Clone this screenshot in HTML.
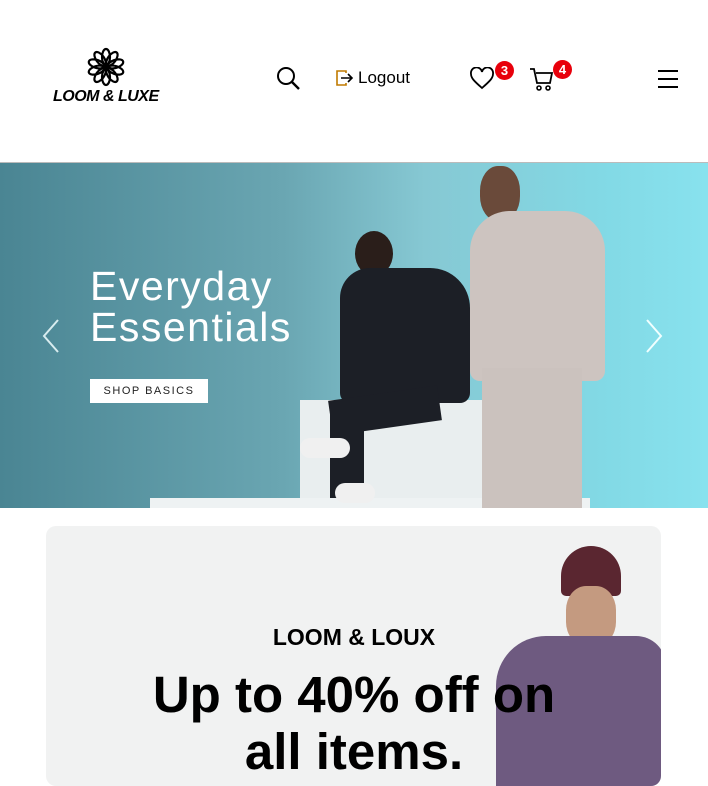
<!DOCTYPE html>
<html><head><style>
body{margin:0;width:708px;height:767px;overflow:hidden;background:#fff;font-family:"Liberation Sans",sans-serif;position:relative}
.abs{position:absolute}
.badge{position:absolute;width:19px;height:19px;border-radius:50%;background:#e8000b;color:#fff;font-weight:bold;font-size:13px;text-align:center;line-height:19px}
</style></head><body>
<svg class="abs" style="left:84px;top:47px" width="44" height="40" viewBox="0 0 44 40">
<g transform="translate(22,20)" fill="none" stroke="#000" stroke-width="2.2">
<g id="p"><ellipse cx="0" cy="-10" rx="4" ry="8"/></g>
<use href="#p" transform="rotate(36)"/><use href="#p" transform="rotate(72)"/><use href="#p" transform="rotate(108)"/><use href="#p" transform="rotate(144)"/><use href="#p" transform="rotate(180)"/><use href="#p" transform="rotate(216)"/><use href="#p" transform="rotate(252)"/><use href="#p" transform="rotate(288)"/><use href="#p" transform="rotate(324)"/>
<circle r="3" fill="#000"/></g></svg>
<div class="abs" style="left:53px;top:88px;font-weight:bold;font-style:italic;font-size:16px;letter-spacing:-0.5px">LOOM &amp; LUXE</div>
<svg class="abs" style="left:276px;top:66px" width="25" height="25" viewBox="0 0 25 25"><circle cx="10" cy="10" r="8" fill="none" stroke="#000" stroke-width="2"/><path d="M16 16 L23 23" stroke="#000" stroke-width="2.4"/></svg>
<svg class="abs" style="left:336px;top:70px" width="18" height="16" viewBox="0 0 18 16"><path d="M10 3V1H1v14h9v-2" fill="none" stroke="#c07a00" stroke-width="1.6"/><path d="M5 8h11M12 4l4 4-4 4" fill="none" stroke="#000" stroke-width="1.6"/></svg>
<div class="abs" style="left:358px;top:68px;font-size:17px">Logout</div>
<svg class="abs" style="left:469px;top:67px" width="26" height="23" viewBox="0 0 26 23"><path d="M13 21 C5 14 2 11 2 7 A5.5 5.5 0 0 1 13 5 A5.5 5.5 0 0 1 24 7 C24 11 21 14 13 21Z" fill="none" stroke="#000" stroke-width="1.8"/></svg>
<div class="badge" style="left:495px;top:61px">3</div>
<svg class="abs" style="left:529px;top:67px" width="26" height="25" viewBox="0 0 26 25"><path d="M1 2h4l3 14h13l2-10H7" fill="none" stroke="#000" stroke-width="1.8"/><circle cx="10" cy="21" r="2" fill="none" stroke="#000" stroke-width="1.6"/><circle cx="19" cy="21" r="2" fill="none" stroke="#000" stroke-width="1.6"/></svg>
<div class="badge" style="left:553px;top:60px">4</div>
<div class="abs" style="left:658px;top:70px;width:20px;height:2px;background:#000;box-shadow:0 8px 0 #000,0 16px 0 #000"></div>
<div class="abs" style="left:0;top:162px;width:708px;height:1px;background:#bbb"></div>
<div class="abs" style="left:0;top:163px;width:708px;height:345px;background:linear-gradient(90deg,#4a8593 0%,#6aa6b2 40%,#86c8d3 60%,#82d9e5 85%,#88e2ee 100%);overflow:hidden">
 <div class="abs" style="left:300px;top:237px;width:185px;height:110px;background:#e9eeef"></div>
 <div class="abs" style="left:150px;top:335px;width:440px;height:20px;background:#eef2f3"></div>
 <div class="abs" style="left:355px;top:68px;width:38px;height:45px;border-radius:50%;background:#2a1e1a"></div>
 <div class="abs" style="left:340px;top:105px;width:130px;height:135px;border-radius:30px 40px 10px 10px;background:#1c1f26"></div>
 <div class="abs" style="left:330px;top:230px;width:110px;height:35px;background:#1c1f26;transform:rotate(-8deg)"></div>
 <div class="abs" style="left:330px;top:240px;width:34px;height:95px;background:#1c1f26"></div>
 <div class="abs" style="left:300px;top:275px;width:50px;height:20px;border-radius:10px;background:#f0f0f0"></div>
 <div class="abs" style="left:335px;top:320px;width:40px;height:20px;border-radius:10px;background:#f0f0f0"></div>
 <div class="abs" style="left:480px;top:3px;width:40px;height:55px;border-radius:45%;background:#6a4a3a"></div>
 <div class="abs" style="left:470px;top:48px;width:135px;height:170px;border-radius:40px 40px 10px 10px;background:#cdc4c0"></div>
 <div class="abs" style="left:482px;top:205px;width:100px;height:140px;background:#cbc2be"></div>
 <div class="abs" style="left:90px;top:103px;color:#fff;font-size:41px;line-height:41px;letter-spacing:1.5px">Everyday<br>Essentials</div>
 <div class="abs" style="left:90px;top:216px;width:118px;height:24px;background:#fff;color:#222;font-size:11px;letter-spacing:1.5px;text-align:center;line-height:24px">SHOP BASICS</div>
 <svg class="abs" style="left:40px;top:155px" width="24" height="36"><path d="M18 2 L4 18 L18 34" fill="none" stroke="#d8ecef" stroke-width="2"/></svg>
 <svg class="abs" style="left:643px;top:155px" width="24" height="36"><path d="M4 2 L18 18 L4 34" fill="none" stroke="#f0ffff" stroke-width="2"/></svg>
</div>
<div class="abs" style="left:46px;top:526px;width:615px;height:260px;background:#f1f2f2;border-radius:10px;overflow:hidden">
 <div class="abs" style="left:515px;top:20px;width:60px;height:50px;border-radius:30px 30px 5px 5px;background:#5a2630"></div>
 <div class="abs" style="left:520px;top:60px;width:50px;height:60px;border-radius:40%;background:#c49a80"></div>
 <div class="abs" style="left:450px;top:110px;width:170px;height:150px;border-radius:50px 30px 0 0;background:#6e5a80"></div>
</div>
<div class="abs" style="left:0;top:624px;width:708px;text-align:center;font-weight:bold;font-size:23px">LOOM &amp; LOUX</div>
<div class="abs" style="left:0;top:666px;width:708px;text-align:center;font-weight:bold;font-size:51px;line-height:57px">Up to 40% off on<br>all items.</div>
</body></html>
